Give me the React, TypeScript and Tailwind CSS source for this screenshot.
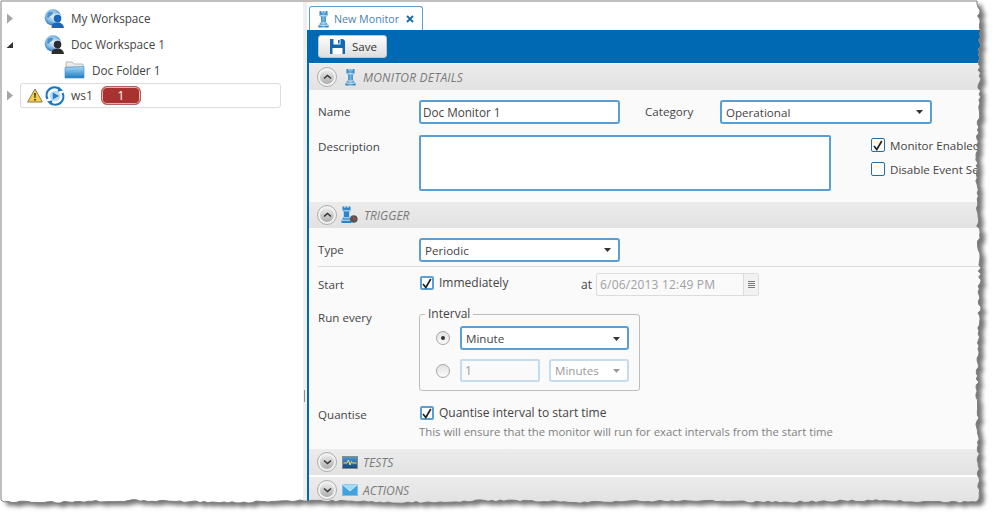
import type { ReactNode } from "react";

const font = "font-['Open_Sans','Noto_Sans',sans-serif]";

// torn paper edge, seeded so the picture is stable
function tornEdge() {
    let seed = 17;
    const rnd = () => {
        seed = (seed * 16807) % 2147483647;
        return seed / 2147483647;
    };
    const pts: string[] = ["1,1", "977,1"];
    for (let y = 4; y < 500; y += 3) {
        const x = 978.5 + Math.sin(y / 37) * 1.2 + (rnd() - 0.5) * 3.2;
        pts.push(`${x.toFixed(1)},${y}`);
    }
    pts.push("976,502");
    for (let x = 972; x > 2; x -= 4) {
        const y = 501.5 + Math.sin(x / 29) * 0.8 + (rnd() - 0.5) * 2;
        pts.push(`${x},${y.toFixed(1)}`);
    }
    pts.push("1,500");
    return pts;
}

function PaperEdge() {
    const pts = tornEdge();
    const d = `M${pts.join("L")}Z`;
    const outer = "M0,0H999V519H0Z";
    return (
        <svg className="absolute inset-0 pointer-events-none" width="999" height="519">
            <defs>
                <filter id="tornBlur" x="-5%" y="-5%" width="110%" height="110%">
                    <feGaussianBlur stdDeviation="2" />
                </filter>
                <clipPath id="outside">
                    <path d={outer + d} clipRule="evenodd" />
                </clipPath>
            </defs>
            <path d={outer + d} fill="#fff" fillRule="evenodd" />
            <g clipPath="url(#outside)">
                <path d={d} fill="#777" filter="url(#tornBlur)" transform="translate(5,4)" />
            </g>
            <path d={d} fill="none" stroke="#808080" strokeWidth="1" />
        </svg>
    );
}

function Arrow({ open }: { open?: boolean }) {
    return (
        <svg width="9" height="11" viewBox="0 0 9 11">
            {open ? <path d="M0.5 9 L7 9 L7 3 Z" fill="#333" /> : <path d="M1 0.5 L7 5.5 L1 10.5 Z" fill="#a6a6a6" />}
        </svg>
    );
}

function GlobeUser({ dark }: { dark?: boolean }) {
    const id = dark ? "g1" : "g2";
    const body = dark ? "#2c2c2c" : "#1a66b8";
    return (
        <svg width="21" height="19" viewBox="0 0 21 19">
            <defs>
                <radialGradient id={id} cx="0.45" cy="0.4" r="0.65">
                    <stop offset="0" stopColor="#e6f3fb" />
                    <stop offset="0.55" stopColor="#7fb8e2" />
                    <stop offset="1" stopColor="#145ea8" />
                </radialGradient>
            </defs>
            <circle cx="9" cy="8.5" r="8.3" fill={`url(#${id})`} />
            <path d="M4 4 q3 -2 5 -1 q0 3 -3 4 q-1 3 -3 1 Z" fill="#1f78c4" opacity="0.7" />
            <circle cx="13.5" cy="9.5" r="3.8" fill={body} />
            <circle cx="13.5" cy="9.5" r="4.6" fill="none" stroke="#e8f3fb" strokeWidth="0.8" />
            <path d="M7.5 19 q0 -5.5 6 -5.5 q6 0 6.5 5.5 Z" fill={body} />
        </svg>
    );
}

function Folder() {
    return (
        <svg width="21" height="18" viewBox="0 0 21 18">
            <defs>
                <linearGradient id="fold" x1="0" y1="0" x2="0" y2="1">
                    <stop offset="0" stopColor="#a9daf5" />
                    <stop offset="1" stopColor="#1c7cc4" />
                </linearGradient>
            </defs>
            <path d="M2 5 L2 1 L8 1 L10 3 L19 3 L19 6 L2 6 Z" fill="#ececec" stroke="#ababab" strokeWidth="0.8" />
            <path d="M1 6.5 L20 5.5 L20 17 L1 17 Z" fill="url(#fold)" stroke="#3f8cc6" strokeWidth="0.6" />
        </svg>
    );
}

function Warning() {
    return (
        <svg width="16" height="15" viewBox="0 0 16 15">
            <path d="M8 1 L15.3 14 L0.7 14 Z" fill="#f6cf4a" stroke="#8a7a4a" strokeWidth="1" strokeLinejoin="round" />
            <path d="M7.2 5 H8.8 L8.5 10 H7.5 Z M7.2 11 H8.8 V12.6 H7.2 Z" fill="#222" />
        </svg>
    );
}

function RefreshPlay() {
    return (
        <svg width="20" height="20" viewBox="0 0 20 20">
            <path d="M2.5 13 A8 8 0 0 1 14.5 3" fill="none" stroke="#1a78c2" strokeWidth="2.2" />
            <path d="M17.5 7 A8 8 0 0 1 5.5 17" fill="none" stroke="#1a78c2" strokeWidth="2.2" />
            <path d="M13.5 0.5 L18 4.5 L12.5 5.8 Z M6.5 19.5 L2 15.5 L7.5 14.2 Z" fill="#1a78c2" />
            <circle cx="10" cy="10" r="5.2" fill="#bcdcf3" />
            <path d="M7.8 6.6 L14 10 L7.8 13.4 Z" fill="#1f7fcb" />
        </svg>
    );
}

function Rook({ id }: { id: string }) {
    return (
        <svg width="11" height="18" viewBox="0 0 11 18">
            <defs>
                <linearGradient id={id} x1="0" y1="0" x2="1" y2="0">
                    <stop offset="0" stopColor="#1e6fb2" />
                    <stop offset="0.5" stopColor="#6db2e2" />
                    <stop offset="1" stopColor="#1e6fb2" />
                </linearGradient>
            </defs>
            <path
                d="M1.5 1 H3.5 V2.5 H4.5 V1 H6.5 V2.5 H7.5 V1 H9.5 V5.5 L8 7 V12 L9.5 14 V15 H10.5 V17.5 H0.5 V15 H1.5 V14 L3 12 V7 L1.5 5.5 Z"
                fill={`url(#${id})`}
            />
            <path d="M2 5.8 H9 M2.5 13 H8.5 M1 15.2 H10" stroke="#e4f2fb" strokeWidth="0.9" />
        </svg>
    );
}

function TriggerIcon() {
    return (
        <svg width="17" height="18" viewBox="0 0 17 18">
            <path
                d="M1.5 0.5 H3.5 V2 H4.5 V0.5 H6.5 V2 H7.5 V0.5 H9.5 V4.5 L8.2 6 V11 L9.5 12.5 V14 H10.5 V17 H0.5 V14 H1.5 V12.5 L2.8 11 V6 L1.5 4.5 Z"
                fill="#2d86c9"
            />
            <path d="M2 4.8 H9 M2.5 11.8 H8.5 M1 14.2 H10" stroke="#e4f2fb" strokeWidth="0.9" />
            <circle cx="12.8" cy="13" r="3.8" fill="#555" />
            <path d="M12.8 10.6 V13 H15" stroke="#e03a3a" strokeWidth="1" fill="none" />
        </svg>
    );
}

function TestsIcon() {
    return (
        <svg width="16" height="13" viewBox="0 0 16 13">
            <defs>
                <linearGradient id="tst" x1="0" y1="0" x2="0" y2="1">
                    <stop offset="0" stopColor="#4f9bd6" />
                    <stop offset="1" stopColor="#0f4677" />
                </linearGradient>
            </defs>
            <rect x="0.5" y="0.5" width="15" height="12" fill="url(#tst)" stroke="#8b8b8b" />
            <path d="M1.5 7 H5 L6.5 4 L8 9 L9.5 5.5 L10.5 7 H14.5" fill="none" stroke="#ffd980" strokeWidth="1" />
        </svg>
    );
}

function MailIcon() {
    return (
        <svg width="16" height="12" viewBox="0 0 16 12">
            <rect x="0.5" y="0.5" width="15" height="11" fill="#3fa3e0" stroke="#7fbde6" />
            <path d="M0.5 0.5 L8 7 L15.5 0.5" fill="#a5d8f5" stroke="#e7f5fd" strokeWidth="0.8" />
        </svg>
    );
}

function SaveIcon() {
    return (
        <svg width="17" height="17" viewBox="0 0 17 17">
            <path d="M1 1 H14 L16 3 V16 H1 Z" fill="#1268b3" />
            <rect x="4.5" y="1" width="7" height="5.5" fill="#fff" />
            <rect x="9" y="2" width="1.6" height="3.5" fill="#1268b3" />
            <rect x="3.5" y="10" width="10" height="6" fill="#fff" />
        </svg>
    );
}

function Collapse({ up }: { up?: boolean }) {
    return (
        <span className="w-[20px] h-[20px] shrink-0 rounded-full border border-[#adadad] bg-[#f2f2f2] flex items-center justify-center">
            <span className="w-[14px] h-[14px] rounded-full bg-gradient-to-b from-[#ececec] to-[#adadad] flex items-center justify-center">
                <svg width="9" height="6" viewBox="0 0 9 6">
                    <path d={up ? "M1 4.5 L4.5 1.5 L8 4.5" : "M1 1.5 L4.5 4.5 L8 1.5"} fill="none" stroke="#333" strokeWidth="1.5" />
                </svg>
            </span>
        </span>
    );
}

function SectionHeader({
    icon,
    title,
    up,
    iconClass,
    titleClass,
}: {
    icon: ReactNode;
    title: string;
    up?: boolean;
    iconClass: string;
    titleClass?: string;
}) {
    return (
        <div className="h-[26px] flex items-center pl-[8px] bg-gradient-to-b from-[#ececec] to-[#e2e2e2] shrink-0">
            <Collapse up={up} />
            <span className={`flex justify-center items-center ${iconClass}`}>{icon}</span>
            <span className={`text-[12px] italic text-[#7a7a7a] pt-px ${titleClass ?? ""}`}>{title}</span>
        </div>
    );
}

function Dropdown({ value, className, disabled }: { value: string; className: string; disabled?: boolean }) {
    return (
        <div
            className={`flex items-center justify-between shrink-0 rounded-[3px] bg-white text-[11.6px] pl-[4px] pr-[7px] ${className} ${
                disabled ? "border-2 border-[#c4dcee] text-[#9a9a9a]" : "border-2 border-[#5a9fd4] text-[#444]"
            }`}
        >
            <span className="pt-px">{value}</span>
            <svg width="7" height="4" viewBox="0 0 7 4">
                <path d="M0 0 H7 L3.5 4 Z" fill={disabled ? "#9a9a9a" : "#333"} />
            </svg>
        </div>
    );
}

function Check({ on, label, focus, labelClass }: { on?: boolean; label: string; focus?: boolean; labelClass?: string }) {
    return (
        <div className="flex items-center h-[14px]">
            <span
                className={`w-[14px] h-[14px] shrink-0 rounded-[2px] bg-white flex items-center justify-center ${
                    focus ? "border-2 border-[#5a9fd4]" : "border border-[#1f6ea8]"
                }`}
            >
                {on && (
                    <svg width="10" height="11" viewBox="0 0 10 11">
                        <path d="M1 6 L3.8 9.5 L8.8 1" fill="none" stroke="#222" strokeWidth="1.7" />
                    </svg>
                )}
            </span>
            <span className={`ml-[5px] text-[#444] whitespace-nowrap ${labelClass ?? "text-[12px]"}`}>{label}</span>
        </div>
    );
}

function Radio({ on }: { on?: boolean }) {
    return (
        <span className="w-[14px] h-[14px] shrink-0 rounded-full border border-[#a3a3a3] bg-gradient-to-b from-[#e2e2e2] to-[#fbfbfb] flex items-center justify-center">
            {on && <span className="w-[4px] h-[4px] rounded-full bg-[#333]" />}
        </span>
    );
}

function FormLabel({ children, className }: { children: ReactNode; className?: string }) {
    return <div className={`w-[101px] shrink-0 text-[11.6px] text-[#444] ${className ?? ""}`}>{children}</div>;
}

function TreeRow({ pad, arrow, children }: { pad: string; arrow?: ReactNode; children: ReactNode }) {
    return (
        <div className="h-[26px] flex items-center text-[11.7px] text-[#444]">
            <span className="w-[15px] pl-[5px] flex">{arrow}</span>
            <div className={`flex items-center ${pad}`}>{children}</div>
        </div>
    );
}

export default function App() {
    return (
        <div className={`relative w-[999px] h-[519px] overflow-hidden bg-white flex ${font}`}>
            {/* tree */}
            <div className="w-[303px] shrink-0 pt-[5px] pl-px">
                <TreeRow pad="pl-[28px]" arrow={<Arrow />}>
                    <GlobeUser />
                    <span className="ml-[6px] pt-px">My Workspace</span>
                </TreeRow>
                <TreeRow pad="pl-[28px]" arrow={<Arrow open />}>
                    <GlobeUser dark />
                    <span className="ml-[6px] pt-px">Doc Workspace 1</span>
                </TreeRow>
                <TreeRow pad="pl-[48px]">
                    <Folder />
                    <span className="ml-[7px] pt-px">Doc Folder 1</span>
                </TreeRow>
                <div className="h-[25px] flex items-center text-[12px] text-[#444]">
                    <span className="w-[19px] pl-[5px] flex">
                        <Arrow />
                    </span>
                    <div className="w-[261px] h-[25px] border border-[#dcdcdc] rounded-[3px] flex items-center pl-[6px]">
                        <Warning />
                        <span className="ml-[2px] flex">
                            <RefreshPlay />
                        </span>
                        <span className="ml-[6px] pt-px">ws1</span>
                        <span className="ml-[8px] w-[40px] h-[19px] rounded-[6px] bg-[#a8322f] border border-[#b8605e] shadow-[inset_0_0_0_1px_#e3b0ae] flex items-center justify-center text-white text-[12px]">
                            1
                        </span>
                    </div>
                </div>
            </div>

            {/* splitter */}
            <div className="w-[4px] shrink-0 bg-[#efefef] flex items-center">
                <span className="h-[12px] w-[1px] ml-[1px] mt-[272px] bg-[#8a8a8a]" />
            </div>

            {/* monitor editor */}
            <div className="flex-1 flex flex-col min-w-0">
                <div className="h-[30px] pt-[6px] pl-[2px] shrink-0">
                    <div className="w-[114px] h-[24px] border border-b-0 border-[#5a9fd4] rounded-t-[3px] flex items-center pl-[8px] text-[10.7px] text-[#4a7fb0] whitespace-nowrap">
                        <Rook id="rk1" />
                        <span className="ml-[5px] pt-px">New Monitor</span>
                        <svg className="ml-[7px]" width="8" height="8" viewBox="0 0 8 8">
                            <path d="M1 1 L7 7 M7 1 L1 7" stroke="#1f6ea8" strokeWidth="2" />
                        </svg>
                    </div>
                </div>

                <div className="flex-1 border-l-2 border-[#0069b4] bg-[#fafafa] flex flex-col">
                    <div className="h-[33px] shrink-0 bg-[#0069b4] pl-[9px] pt-[5px] mb-px">
                        <div className="w-[69px] h-[23px] rounded-[3px] border border-[#c4c4c4] bg-gradient-to-b from-white to-[#dedede] flex items-center pl-[10px] text-[11.5px] text-[#333]">
                            <SaveIcon />
                            <span className="ml-[6px] pt-px">Save</span>
                        </div>
                    </div>

                    <SectionHeader
                        up
                        icon={<Rook id="rk2" />}
                        iconClass="w-[16px] ml-[5px] mr-[5px]"
                        title="MONITOR DETAILS"
                        titleClass="tracking-[0.2px]"
                    />

                    <div className="pl-[9px] h-[112px] shrink-0">
                        <div className="flex items-center mt-[10px] h-[24px]">
                            <FormLabel>Name</FormLabel>
                            <div className="w-[201px] shrink-0 h-[24px] border-2 border-[#5a9fd4] rounded-[3px] bg-white text-[11.7px] text-[#444] pl-[2px] pt-px flex items-center">
                                Doc Monitor 1
                            </div>
                            <div className="w-[75px] shrink-0 ml-[25px] text-[11.6px] text-[#444]">Category</div>
                            <Dropdown value="Operational" className="w-[212px] h-[24px]" />
                        </div>
                        <div className="flex mt-[11px]">
                            <FormLabel className="pt-[3px]">Description</FormLabel>
                            <div className="w-[412px] shrink-0 h-[56px] border-2 border-[#5a9fd4] rounded-[2px] bg-white" />
                            <div className="ml-[40px] pt-[3px] flex flex-col gap-[10px]">
                                <Check on label="Monitor Enabled" labelClass="text-[11.6px] pt-[2px]" />
                                <Check label="Disable Event Sending" labelClass="text-[11.6px] pt-[2px]" />
                            </div>
                        </div>
                    </div>

                    <SectionHeader up icon={<TriggerIcon />} iconClass="w-[17px] ml-[4px] mr-[6px]" title="TRIGGER" />

                    <div className="h-[221px] shrink-0 pl-[9px]">
                        <div className="flex items-center mt-[10px] h-[24px]">
                            <FormLabel>Type</FormLabel>
                            <Dropdown value="Periodic" className="w-[201px] h-[24px]" />
                        </div>
                        <div className="border-t border-[#dadada] mt-[4px]" />
                        <div className="flex items-center mt-[6px] h-[23px]">
                            <FormLabel>Start</FormLabel>
                            <div className="pl-px w-[162px] shrink-0 mb-[3px]">
                                <Check on focus label="Immediately" />
                            </div>
                            <span className="text-[12px] text-[#444] w-[15px] shrink-0">at</span>
                            <div className="w-[163px] shrink-0 h-[23px] border border-[#dcdcdc] rounded-[2px] bg-[#fafafa] flex items-stretch text-[12px] tracking-[0.2px] text-[#a0a0a0]">
                                <span className="flex-1 pl-[3px] flex items-center">6/06/2013 12:49 PM</span>
                                <span className="w-[15px] border-l border-[#dcdcdc] bg-[#f2f2f2] flex items-center justify-center">
                                    <svg width="7" height="7" viewBox="0 0 7 7">
                                        <path d="M0 0.5 H7 M0 2.5 H7 M0 4.5 H7 M0 6.5 H7" stroke="#7a7a7a" strokeWidth="1" />
                                    </svg>
                                </span>
                            </div>
                        </div>
                        <div className="flex mt-[10px]">
                            <FormLabel className="pt-[3px]">Run every</FormLabel>
                            <fieldset className="w-[221px] shrink-0 h-[85px] border border-[#bdbdbd] rounded-[3px] pl-[16px]">
                                <legend className="ml-[-11px] px-[3px] text-[12px] leading-[16px] text-[#444]">Interval</legend>
                                <div className="flex items-center mt-[4px] h-[24px]">
                                    <Radio on />
                                    <Dropdown value="Minute" className="w-[169px] h-[24px] ml-[10px] pt-px" />
                                </div>
                                <div className="flex items-center mt-[9px] h-[23px]">
                                    <Radio />
                                    <div className="w-[80px] shrink-0 h-[23px] ml-[10px] border-2 border-[#c4dcee] rounded-[2px] bg-[#fafafa] text-[12px] text-[#9a9a9a] pl-[3px] flex items-center">
                                        1
                                    </div>
                                    <Dropdown disabled value="Minutes" className="w-[80px] h-[23px] ml-[9px]" />
                                </div>
                            </fieldset>
                        </div>
                        <div className="flex mt-[14px]">
                            <FormLabel className="pt-px">Quantise</FormLabel>
                            <div className="pl-px pt-px">
                                <Check on focus label="Quantise interval to start time" />
                                <div className="mt-[4px] ml-[-1px] text-[11.35px] leading-[16px] text-[#808080] whitespace-nowrap">
                                    This will ensure that the monitor will run for exact intervals from the start time
                                </div>
                            </div>
                        </div>
                    </div>

                    <SectionHeader icon={<TestsIcon />} iconClass="w-[16px] ml-[5px] mr-[5px]" title="TESTS" />
                    <div className="h-[2px] shrink-0 bg-white" />
                    <SectionHeader icon={<MailIcon />} iconClass="w-[16px] ml-[5px] mr-[5px]" title="ACTIONS" />
                </div>
            </div>

            <PaperEdge />
        </div>
    );
}
